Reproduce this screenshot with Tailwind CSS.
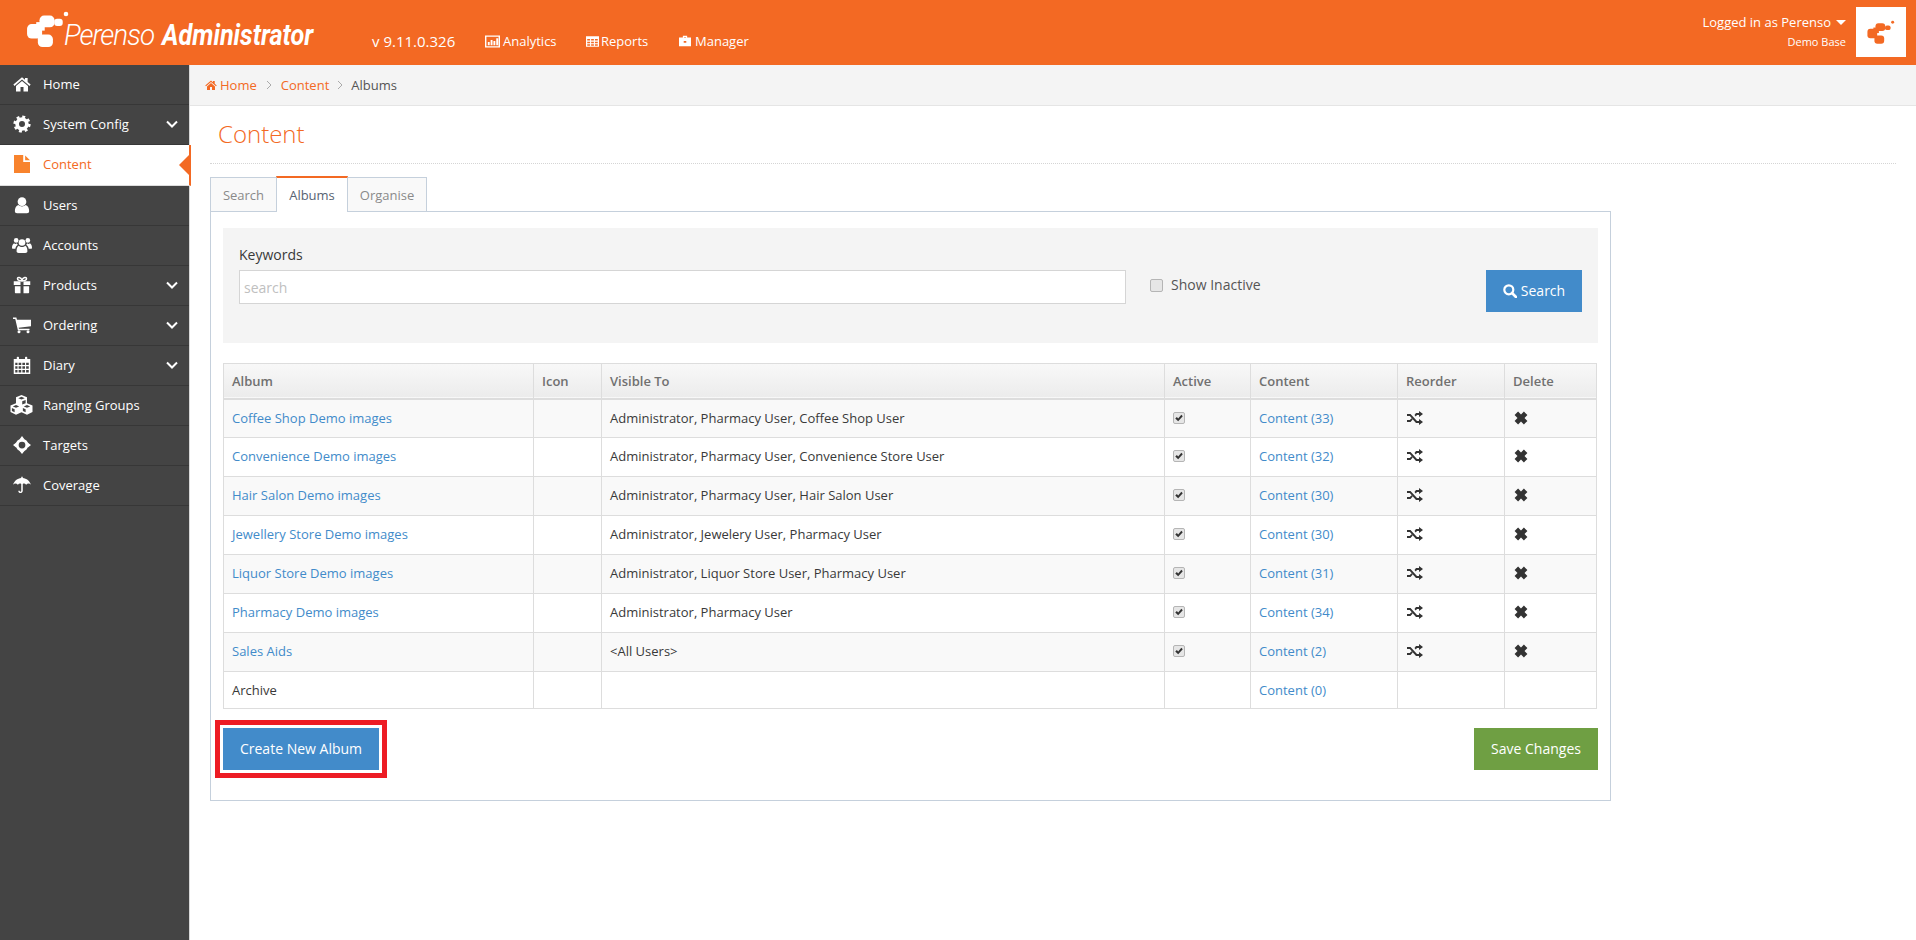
<!DOCTYPE html>
<html lang="en">
  <head>
    <meta charset="UTF-8" />
    <title>Perenso Administrator - Albums</title>
    <script src="https://cdn.jsdelivr.net/npm/@tailwindcss/browser@4"></script>
  </head>
  <body class="h-[940px] overflow-hidden bg-white font-['Open_Sans',sans-serif] text-[13px] leading-[20px] text-[#393939]">
    <!-- Icons -->
    <svg class="hidden">
      <symbol id="logo" viewBox="20 16 132 110"><rect x="60" y="30" width="46" height="36" rx="14" /><rect x="22" y="56" width="46" height="44" rx="14" /><rect x="50" y="50" width="26" height="26" /><rect x="105" y="40" width="26" height="22" rx="9" /><rect x="55" y="88" width="46" height="38" rx="14" /><circle cx="141" cy="25" r="7" /></symbol>
      <symbol id="home" viewBox="0 0 24 24"><path d="M12 3 0.500 12.800 2 14.500 12 6 22 14.500 23.500 12.800 19.500 9.400V4H16V6.400ZM12 8 4 14.800V22H10V16H14V22H20V14.800Z" /></symbol>
      <symbol id="gear" viewBox="0 0 24 24"><circle cx="12" cy="12" r="6.500" fill="none" stroke="currentColor" stroke-width="5" /><circle cx="12" cy="12" r="9.800" fill="none" stroke="currentColor" stroke-width="3.400" stroke-dasharray="3.900 3.800" /></symbol>
      <symbol id="file" viewBox="4 1 16.500 22" preserveAspectRatio="none"><path d="M4 1H13.500V9.500H20.500V23H4ZM15.500 1.500 20.500 7.500H15.500Z" /></symbol>
      <symbol id="user" viewBox="0 0 24 24"><circle cx="12" cy="7.500" r="5.800" /><path d="M7 12C3.500 13 2.500 17 2.500 20 2.500 22 3.500 23 5.500 23H18.500C20.500 23 21.500 22 21.500 20 21.500 17 20.500 13 17 12 14 14.500 10 14.500 7 12Z" /></symbol>
      <symbol id="users" viewBox="0 0 24 24"><circle cx="12" cy="9" r="4" /><circle cx="5" cy="6.500" r="2.800" /><circle cx="19" cy="6.500" r="2.800" /><path d="M8 13C6 14 5.500 17 5.500 19.500 5.500 21 6.500 21.500 8 21.500H16C17.500 21.500 18.500 21 18.500 19.500 18.500 17 18 14 16 13 14 15 10 15 8 13ZM2.500 10C1 11 0 12.500 0 15.500 0 16.500 1 16.500 4 16.500 4.500 14 5.500 12.800 7 11.800 6 11 6 10.500 6 10 4.500 11 3.500 11 2.500 10ZM21.500 10C23 11 24 12.500 24 15.500 24 16.500 23 16.500 20 16.500 19.500 14 18.500 12.800 17 11.800 18 11 18 10.500 18 10 19.500 11 20.500 11 21.500 10Z" /></symbol>
      <symbol id="gift" viewBox="0 0 24 24"><path d="M1 7H10V12H1ZM14 7H23V12H14ZM2.500 13.500H10V23H4C3 23 2.500 22.500 2.500 21.500ZM14 13.500H21.500V21.500C21.500 22.500 21 23 20 23H14Z" /><path d="M12 6.500C9 6.500 6 6 6 3.800 6 1 10.500 1 12 5.500 13.500 1 18 1 18 3.800 18 6 15 6.500 12 6.500Z" fill="none" stroke="currentColor" stroke-width="2" /></symbol>
      <symbol id="cart" viewBox="0 0 24 24"><path d="M0 2H4.500L5.300 5H24V13.500L7.500 15.500 8 17H22V19H6.500L3 4H0Z" /><circle cx="8" cy="21" r="2" /><circle cx="20" cy="21" r="2" /></symbol>
      <symbol id="calendar" viewBox="0 0 24 24"><path fill-rule="evenodd" d="M1 4H5V2C5 .5 8 .5 8 2V4H16V2C16 .5 19 .5 19 2V4H23V24H1ZM3 9V12H6V9ZM7.500 9V12H11V9ZM12.500 9V12H16V9ZM17.500 9V12H21V9ZM3 13.500V17H6V13.500ZM7.500 13.500V17H11V13.500ZM12.500 13.500V17H16V13.500ZM17.500 13.500V17H21V13.500ZM3 18.500V22H6V18.500ZM7.500 18.500V22H11V18.500ZM12.500 18.500V22H16V18.500ZM17.500 18.500V22H21V18.500Z" /></symbol>
      <symbol id="cubes" viewBox="0 0 24 24"><path fill-rule="evenodd" d="M12 1 18 3.500V10L24 12.500V19.500L18 22.500 12 20 6 22.500 0 19.500V12.500L6 10V3.500ZM8.500 4.500 12 6 15.500 4.500 12 3ZM2.500 13.500 6 15 9.500 13.500 6 12ZM14.500 13.500 18 15 21.500 13.500 18 12ZM12.800 8V11.500L16.500 10V6.500ZM4.500 16.500 1.500 15.200V18.600L4.500 20ZM16.500 16.500 13.500 15.200V18.600L16.500 20Z" /></symbol>
      <symbol id="target" viewBox="0 0 24 24"><circle cx="12" cy="12" r="6.500" fill="none" stroke="currentColor" stroke-width="4" /><path d="M12 0 15.500 4.500H8.500ZM12 24 15.500 19.500H8.500ZM0 12 4.500 8.500V15.500ZM24 12 19.500 8.500V15.500Z" /></symbol>
      <symbol id="umbrella" viewBox="0 0 24 24"><path d="M11 1H13V2.500C18 3 22.500 6.500 24 11.500 22 9.500 19.500 9.500 17.500 11.500 16 9.800 14.500 9.500 13 10.500V19.500C13 23.500 7 24 7 19.500H9C9 21.500 11 21.500 11 19.500V10.500C9.500 9.500 8 9.800 6.500 11.500 4.500 9.500 2 9.500 0 11.500 1.500 6.500 6 3 11 2.500Z" /></symbol>
      <symbol id="chevron" viewBox="0 0 12 8"><path d="M1 1.500 6 6.500 11 1.500" fill="none" stroke="currentColor" stroke-width="2" /></symbol>
      <symbol id="crumb" viewBox="0 0 6 10"><path d="M1 1 5 5 1 9" fill="none" stroke="currentColor" stroke-width="1" /></symbol>
      <symbol id="chart" viewBox="0 0 16 14"><path fill-rule="evenodd" d="M0 1H16V14H0ZM1.500 2.500V12.500H14.500V2.500ZM3 8H5V11.500H3ZM6 6H8V11.500H6ZM9 7H11V11.500H9ZM12 4H14V11.500H12Z" /></symbol>
      <symbol id="grid" viewBox="0 0 16 14"><path fill-rule="evenodd" d="M0 1H16V14H0ZM1.500 4.500V6.500H5V4.500ZM6.300 4.500V6.500H9.700V4.500ZM11 4.500V6.500H14.500V4.500ZM1.500 7.800V9.700H5V7.800ZM6.300 7.800V9.700H9.700V7.800ZM11 7.800V9.700H14.500V7.800ZM1.500 11V12.700H5V11ZM6.300 11V12.700H9.700V11ZM11 11V12.700H14.500V11Z" /></symbol>
      <symbol id="case" viewBox="0 0 14 14"><path fill-rule="evenodd" d="M4.500 3V1H9.500V3H14V13H0V3ZM5.800 3H8.200V2.200H5.800ZM5.500 7V9H8.500V7Z" /></symbol>
      <symbol id="search" viewBox="0 0 14 14"><circle cx="5.800" cy="5.800" r="4.500" fill="none" stroke="currentColor" stroke-width="2.200" /><path d="M9 9 13 13" stroke="currentColor" stroke-width="2.600" stroke-linecap="round" /></symbol>
      <symbol id="shuffle" viewBox="0 0 16 14"><path d="M0 3H3.500L10 10H12V8L16 11 12 14V12H9L2.800 5H0ZM0 9H2.800L4.500 7.200 5.700 8.600 3.500 11H0ZM12 0 16 3 12 6V4H10L8.700 5.400 7.500 4 9 2H12Z" /></symbol>
      <symbol id="times" viewBox="0 0 12 12"><path d="M3.500 .5 6 3 8.500 .5 11.500 3.500 9 6 11.500 8.500 8.500 11.500 6 9 3.500 11.500 .5 8.500 3 6 .5 3.500Z" /></symbol>
      <symbol id="check" viewBox="0 0 12 12"><path d="M1.500 6.500 3.500 4.800 5 6.500 8.800 2.200 10.500 3.800 5 10Z" /></symbol>
    </svg>

    <!-- Header -->
    <header class="flex h-[65px] items-start bg-[#f36923] text-white">
      <div class="flex w-[372px] shrink-0">
        <svg class="mt-[11px] ml-[26px] h-[36px] w-[44px] fill-white"><use href="#logo" /></svg>
        <span class="mt-[19px] -ml-[6px] origin-left scale-x-[0.96] font-['Roboto',sans-serif] text-[29px] leading-[32px] font-light tracking-[-1px] italic">Perenso</span>
        <span class="mt-[19px] ml-[4px] origin-left scale-x-[0.87] font-['Roboto',sans-serif] text-[29px] leading-[32px] font-bold whitespace-nowrap italic">Administrator</span>
      </div>
      <nav class="mt-[31px] flex items-center">
        <span class="w-[113px] text-[15px]">v 9.11.0.326</span>
        <a class="flex w-[101px] items-center gap-[3px]"><svg class="h-[14px] w-[15px] fill-white"><use href="#chart" /></svg>Analytics</a>
        <a class="flex w-[93px] items-center gap-[2px]"><svg class="h-[14px] w-[13px] fill-white"><use href="#grid" /></svg>Reports</a>
        <a class="flex items-center gap-[4px]"><svg class="h-[14px] w-[12px] fill-white"><use href="#case" /></svg>Manager</a>
      </nav>
      <div class="mt-[12px] ml-auto text-right">
        <div class="flex h-[20px] items-center gap-[5px]">Logged in as Perenso <span class="h-0 w-0 border-x-[5px] border-t-[5px] border-x-transparent border-t-white"></span></div>
        <div class="mt-[1px] text-[11px] leading-[18px]">Demo Base</div>
      </div>
      <div class="mt-[7px] mr-[10px] ml-[10px] flex h-[50px] w-[50px] items-center justify-center bg-white">
        <svg class="h-[24px] w-[28px] fill-[#f36923]"><use href="#logo" /></svg>
      </div>
    </header>

    <div class="flex h-[875px]">
      <!-- Sidebar -->
      <aside class="w-[190px] shrink-0 border-r border-[#d8d8d8] bg-[#444444] pb-[1px] text-white [&>a]:pb-[2px]">
        <a class="flex h-[40px] items-center border-b border-[#373737] pl-[13px]"><svg class="mr-[12px] h-[18px] w-[18px] fill-white"><use href="#home" /></svg>Home</a>
        <a class="flex h-[40px] items-center border-b border-[#373737] pl-[13px]"><svg class="mr-[12px] h-[18px] w-[18px] fill-white"><use href="#gear" /></svg>System Config<svg class="mr-[11px] ml-auto h-[8px] w-[12px]"><use href="#chevron" /></svg></a>
        <a class="relative flex h-[41px] w-[191px] items-center border-r-2 border-b border-r-[#f36923] border-b-[#dddddd] bg-white pl-[14px] text-[#f36923]"><svg class="mr-[13px] h-[18px] w-[16px] fill-[#f8832d]"><use href="#file" /></svg>Content<span class="absolute top-[10px] right-0 h-0 w-0 border-y-[10px] border-r-[10px] border-y-transparent border-r-[#f36923]"></span></a>
        <a class="flex h-[40px] items-center border-b border-[#373737] pl-[13px]"><svg class="mr-[12px] h-[18px] w-[18px] fill-white"><use href="#user" /></svg>Users</a>
        <a class="flex h-[40px] items-center border-b border-[#373737] pl-[12px]"><svg class="mr-[11px] h-[20px] w-[20px] fill-white"><use href="#users" /></svg>Accounts</a>
        <a class="flex h-[40px] items-center border-b border-[#373737] pl-[13px]"><svg class="mr-[12px] h-[18px] w-[18px] fill-white"><use href="#gift" /></svg>Products<svg class="mr-[11px] ml-auto h-[8px] w-[12px]"><use href="#chevron" /></svg></a>
        <a class="flex h-[40px] items-center border-b border-[#373737] pl-[13px]"><svg class="mr-[12px] h-[18px] w-[18px] fill-white"><use href="#cart" /></svg>Ordering<svg class="mr-[11px] ml-auto h-[8px] w-[12px]"><use href="#chevron" /></svg></a>
        <a class="flex h-[40px] items-center border-b border-[#373737] pl-[13px]"><svg class="mr-[12px] h-[18px] w-[18px] fill-white"><use href="#calendar" /></svg>Diary<svg class="mr-[11px] ml-auto h-[8px] w-[12px]"><use href="#chevron" /></svg></a>
        <a class="flex h-[40px] items-center border-b border-[#373737] pl-[10px]"><svg class="mr-[10px] h-[22px] w-[23px] fill-white"><use href="#cubes" /></svg>Ranging Groups</a>
        <a class="flex h-[40px] items-center border-b border-[#373737] pl-[13px]"><svg class="mr-[12px] h-[18px] w-[18px] fill-white"><use href="#target" /></svg>Targets</a>
        <a class="flex h-[40px] items-center border-b border-[#373737] pl-[13px]"><svg class="mr-[12px] h-[18px] w-[18px] fill-white"><use href="#umbrella" /></svg>Coverage</a>
      </aside>

      <main class="min-w-0 flex-1">
        <!-- Breadcrumb -->
        <div class="flex h-[41px] items-center border-b border-[#e5e5e5] bg-[#f4f4f4] pl-[15px]">
          <svg class="mr-[3px] h-[12px] w-[12px] fill-[#f36923]"><use href="#home" /></svg>
          <a class="text-[#f36923]">Home</a>
          <svg class="mx-[9px] h-[10px] w-[6px] text-[#aaaaaa]"><use href="#crumb" /></svg>
          <a class="text-[#f36923]">Content</a>
          <svg class="mx-[8px] h-[10px] w-[6px] text-[#aaaaaa]"><use href="#crumb" /></svg>
          <span class="text-[#555555]">Albums</span>
        </div>

        <div class="pt-0 pr-[20px] pl-[20px]">
          <h1 class="h-[58px] border-b border-dotted border-[#d5d5d5] pt-[11px] pl-[8px] text-[24px] leading-[33px] font-light text-[#f36923]">Content</h1>

          <!-- Tabs -->
          <div class="mt-[13px] flex h-[35px] items-stretch text-[#8a8a8a]">
            <a class="w-[67px] border border-[#c5d0dc] bg-[#f9f9f9] pt-[7px] text-center">Search</a>
            <a class="relative z-10 -mt-[1px] -ml-px h-[36px] w-[72px] border-x border-t-2 border-x-[#c5d0dc] border-t-[#f36923] bg-white pt-[7px] text-center text-[#576373]">Albums</a>
            <a class="-ml-px w-[80px] border border-[#c5d0dc] bg-[#f9f9f9] pt-[7px] text-center">Organise</a>
          </div>

          <!-- Panel -->
          <section class="-mt-px h-[590px] w-[1401px] border border-[#c5d0dc] px-[12px] pt-[16px]">
            <div class="flex h-[115px] w-[1375px] bg-[#f4f4f4] pt-[17px] pl-[16px]">
              <div class="w-[887px]">
                <label class="block h-[25px] text-[14px] text-[#393939]">Keywords</label>
                <input placeholder="search" class="h-[34px] w-full border border-[#d5d5d5] bg-white px-[4px] text-[14px] placeholder:text-[#c0c0c0]" />
              </div>
              <div class="mt-[30px] ml-[24px] flex h-[20px] items-center gap-[8px] text-[14px] text-[#555555]">
                <span class="h-[13px] w-[13px] rounded-[2px] border border-[#b5b5b5] bg-[#e6e6e6]"></span>
                <span>Show Inactive</span>
              </div>
              <button class="mt-[25px] mr-[16px] ml-auto flex h-[42px] w-[96px] items-center justify-center gap-[4px] bg-[#428bca] text-[14px] text-white"><svg class="h-[14px] w-[14px] fill-white text-white"><use href="#search" /></svg>Search</button>
            </div>

            <!-- Albums table -->
            <table class="mt-[20px] w-[1373px] table-fixed border-collapse border border-[#dddddd] [&_td]:border [&_td]:border-[#dddddd] [&_td]:px-[8px] [&_td]:py-[8px] [&_td]:align-top">
              <colgroup>
                <col class="w-[310px]" /><col class="w-[68px]" /><col class="w-[563px]" /><col class="w-[86px]" /><col class="w-[147px]" /><col class="w-[107px]" /><col class="w-[92px]" />
              </colgroup>
              <thead>
                <tr class="h-[35px] border-b-2 border-[#dddddd] bg-gradient-to-b from-[#f8f8f8] to-[#ececec] text-left font-semibold text-[#707070] [&_th]:border-x [&_th]:border-[#dddddd] [&_th]:px-[8px] [&_th]:font-semibold">
                  <th>Album</th><th>Icon</th><th>Visible To</th><th>Active</th><th>Content</th><th>Reorder</th><th>Delete</th>
                </tr>
              </thead>
              <tbody>
                <tr class="h-[39px] bg-[#f9f9f9]">
                  <td><a class="text-[#428bca]">Coffee Shop Demo images</a></td><td></td><td>Administrator, Pharmacy User, Coffee Shop User</td>
                  <td><span class="mt-[4px] flex h-[12px] w-[12px] rounded-[2px] border border-[#b5b5b5] bg-[#e6e6e6]"><svg class="h-[10px] w-[10px] fill-[#333333]"><use href="#check" /></svg></span></td>
                  <td><a class="text-[#428bca]">Content (33)</a></td>
                  <td><svg class="mt-[3px] h-[14px] w-[18px] fill-[#333333]"><use href="#shuffle" /></svg></td>
                  <td><svg class="mt-[3px] ml-[1px] h-[14px] w-[14px] fill-[#333333]"><use href="#times" /></svg></td>
                </tr>
                <tr class="h-[39px] bg-white">
                  <td><a class="text-[#428bca]">Convenience Demo images</a></td><td></td><td>Administrator, Pharmacy User, Convenience Store User</td>
                  <td><span class="mt-[4px] flex h-[12px] w-[12px] rounded-[2px] border border-[#b5b5b5] bg-[#e6e6e6]"><svg class="h-[10px] w-[10px] fill-[#333333]"><use href="#check" /></svg></span></td>
                  <td><a class="text-[#428bca]">Content (32)</a></td>
                  <td><svg class="mt-[3px] h-[14px] w-[18px] fill-[#333333]"><use href="#shuffle" /></svg></td>
                  <td><svg class="mt-[3px] ml-[1px] h-[14px] w-[14px] fill-[#333333]"><use href="#times" /></svg></td>
                </tr>
                <tr class="h-[39px] bg-[#f9f9f9]">
                  <td><a class="text-[#428bca]">Hair Salon Demo images</a></td><td></td><td>Administrator, Pharmacy User, Hair Salon User</td>
                  <td><span class="mt-[4px] flex h-[12px] w-[12px] rounded-[2px] border border-[#b5b5b5] bg-[#e6e6e6]"><svg class="h-[10px] w-[10px] fill-[#333333]"><use href="#check" /></svg></span></td>
                  <td><a class="text-[#428bca]">Content (30)</a></td>
                  <td><svg class="mt-[3px] h-[14px] w-[18px] fill-[#333333]"><use href="#shuffle" /></svg></td>
                  <td><svg class="mt-[3px] ml-[1px] h-[14px] w-[14px] fill-[#333333]"><use href="#times" /></svg></td>
                </tr>
                <tr class="h-[39px] bg-white">
                  <td><a class="text-[#428bca]">Jewellery Store Demo images</a></td><td></td><td>Administrator, Jewelery User, Pharmacy User</td>
                  <td><span class="mt-[4px] flex h-[12px] w-[12px] rounded-[2px] border border-[#b5b5b5] bg-[#e6e6e6]"><svg class="h-[10px] w-[10px] fill-[#333333]"><use href="#check" /></svg></span></td>
                  <td><a class="text-[#428bca]">Content (30)</a></td>
                  <td><svg class="mt-[3px] h-[14px] w-[18px] fill-[#333333]"><use href="#shuffle" /></svg></td>
                  <td><svg class="mt-[3px] ml-[1px] h-[14px] w-[14px] fill-[#333333]"><use href="#times" /></svg></td>
                </tr>
                <tr class="h-[39px] bg-[#f9f9f9]">
                  <td><a class="text-[#428bca]">Liquor Store Demo images</a></td><td></td><td>Administrator, Liquor Store User, Pharmacy User</td>
                  <td><span class="mt-[4px] flex h-[12px] w-[12px] rounded-[2px] border border-[#b5b5b5] bg-[#e6e6e6]"><svg class="h-[10px] w-[10px] fill-[#333333]"><use href="#check" /></svg></span></td>
                  <td><a class="text-[#428bca]">Content (31)</a></td>
                  <td><svg class="mt-[3px] h-[14px] w-[18px] fill-[#333333]"><use href="#shuffle" /></svg></td>
                  <td><svg class="mt-[3px] ml-[1px] h-[14px] w-[14px] fill-[#333333]"><use href="#times" /></svg></td>
                </tr>
                <tr class="h-[39px] bg-white">
                  <td><a class="text-[#428bca]">Pharmacy Demo images</a></td><td></td><td>Administrator, Pharmacy User</td>
                  <td><span class="mt-[4px] flex h-[12px] w-[12px] rounded-[2px] border border-[#b5b5b5] bg-[#e6e6e6]"><svg class="h-[10px] w-[10px] fill-[#333333]"><use href="#check" /></svg></span></td>
                  <td><a class="text-[#428bca]">Content (34)</a></td>
                  <td><svg class="mt-[3px] h-[14px] w-[18px] fill-[#333333]"><use href="#shuffle" /></svg></td>
                  <td><svg class="mt-[3px] ml-[1px] h-[14px] w-[14px] fill-[#333333]"><use href="#times" /></svg></td>
                </tr>
                <tr class="h-[39px] bg-[#f9f9f9]">
                  <td><a class="text-[#428bca]">Sales Aids</a></td><td></td><td>&lt;All Users&gt;</td>
                  <td><span class="mt-[4px] flex h-[12px] w-[12px] rounded-[2px] border border-[#b5b5b5] bg-[#e6e6e6]"><svg class="h-[10px] w-[10px] fill-[#333333]"><use href="#check" /></svg></span></td>
                  <td><a class="text-[#428bca]">Content (2)</a></td>
                  <td><svg class="mt-[3px] h-[14px] w-[18px] fill-[#333333]"><use href="#shuffle" /></svg></td>
                  <td><svg class="mt-[3px] ml-[1px] h-[14px] w-[14px] fill-[#333333]"><use href="#times" /></svg></td>
                </tr>
                <tr class="h-[35px] bg-white">
                  <td>Archive</td><td></td><td></td><td></td>
                  <td><a class="text-[#428bca]">Content (0)</a></td><td></td><td></td>
                </tr>
              </tbody>
            </table>

            <div class="relative mt-[19px] flex w-[1375px] justify-between">
              <button class="h-[42px] w-[156px] bg-[#428bca] text-[14px] text-white">Create New Album</button>
              <!-- Red annotation box drawn over the screenshot -->
              <span class="absolute -top-[8px] -left-[8px] h-[58px] w-[172px] border-[5px] border-[#ed1c24]"></span>
              <button class="h-[42px] w-[124px] bg-[#6f9f43] text-[14px] text-white">Save Changes</button>
            </div>
          </section>
        </div>
      </main>
    </div>
  </body>
</html>
